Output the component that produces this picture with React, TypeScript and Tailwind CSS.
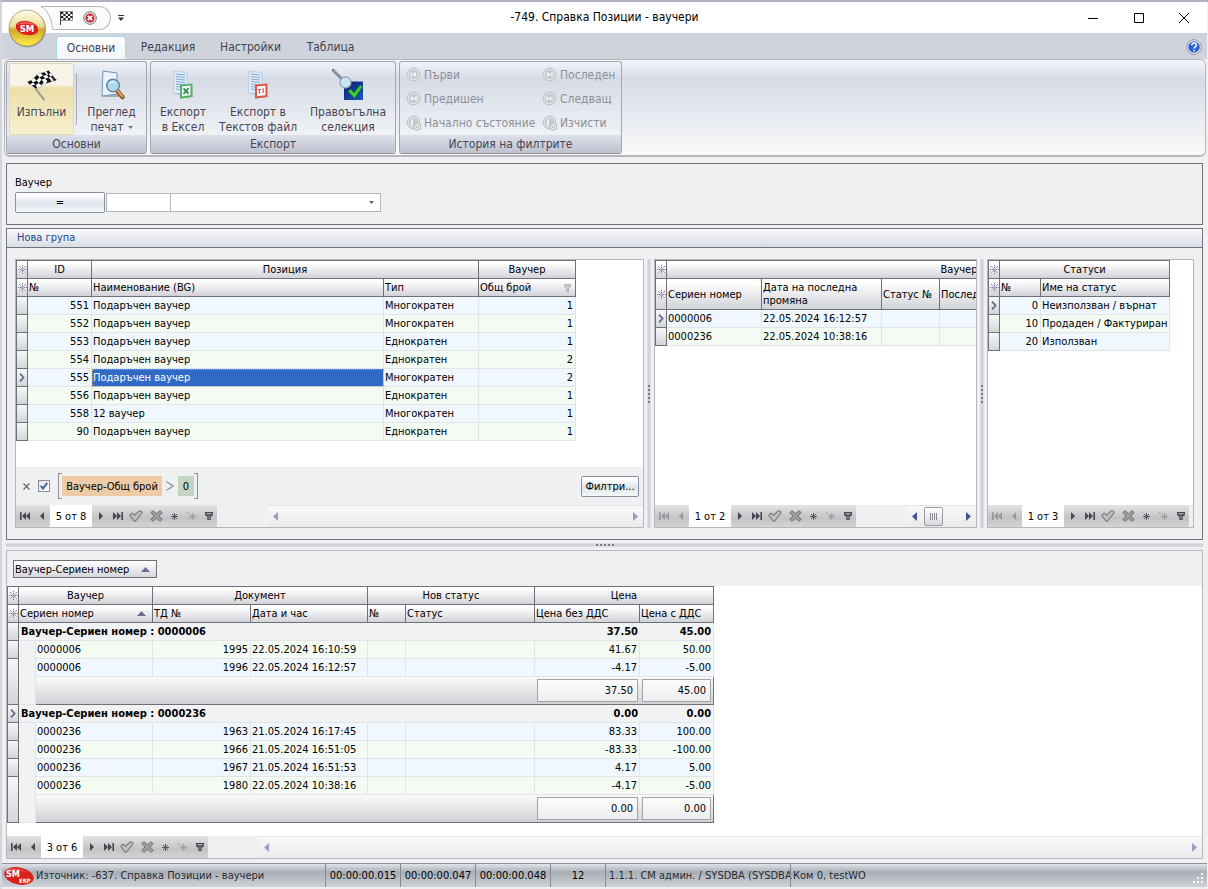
import type { ReactNode } from "react";
import clsx from "clsx";

const headBase =
  "h-[18px] border-r border-b border-[#707176] bg-linear-to-b from-white from-10% via-[#ececef] via-50% to-[#d2d3d8] font-normal overflow-hidden";
const headCell = clsx(headBase, "pl-px pr-0.5 text-left leading-[17px] whitespace-nowrap");
const bandCell = clsx(headBase, "border-t px-0.5 text-center leading-[17px] whitespace-nowrap");
const wrapCell = clsx(headBase, "pl-px pr-0.5 text-left leading-[13px]");
const bodyCell =
  "h-[18px] border-r border-b border-[#e2e4e9] pl-px pr-0.5 leading-[17px] whitespace-nowrap overflow-hidden";
const indicatorCell =
  "h-[18px] border-x border-b border-[#707176] bg-linear-to-b from-[#f6f7f9] to-[#d3d5da] p-0";
const gridTable = "table-fixed border-separate border-spacing-0";
const blueRow = "bg-[#f0f7ff]";
const greenRow = "bg-[#f4fbf3]";
const pushButton =
  "rounded-xs border border-[#8a8f9b] bg-linear-to-b from-white from-10% via-[#dde4ea] via-55% to-[#f7fafc] text-black";

const SnowMark = () => (
  <svg viewBox="0 0 9 9" className="mx-auto block h-[9px] w-[9px]" stroke="#7d7c9c" strokeWidth="1" fill="none">
    <path d="M4.5 0v9M0 4.5h9M1 1l7 7M8 1l-7 7" strokeDasharray="1.3 0.7" />
  </svg>
);

const RowArrow = () => (
  <svg viewBox="0 0 6 9" className="mx-auto block h-[9px] w-[6px]" fill="none" stroke="#66648a" strokeWidth="1.7">
    <path d="M1 0.7l3.6 3.8L1 8.3" />
  </svg>
);

const SortUp = () => (
  <svg viewBox="0 0 9 5" className="h-[5px] w-[9px] flex-none" fill="#6d6b90">
    <path d="M4.5 0L9 5H0z" />
  </svg>
);

const HeadIndicator = ({ top }: { top?: boolean }) => (
  <th className={clsx(headBase, "border-l p-0", top && "border-t")}>
    <SnowMark />
  </th>
);

const Indicator = ({ current, rowSpan }: { current?: boolean; rowSpan?: number }) => (
  <td rowSpan={rowSpan} className={indicatorCell}>
    {current && <RowArrow />}
  </td>
);

/* ---------- record navigator ---------- */

type NavButtonProps = { label: string; width: string; disabled?: boolean; children: ReactNode };

const NavButton = ({ label, width, disabled, children }: NavButtonProps) => (
  <button
    aria-label={label}
    disabled={disabled}
    className={clsx(
      "flex h-full flex-none items-center justify-center",
      width,
      disabled ? "text-[#96989e]" : "text-[#454852]"
    )}
  >
    {children}
  </button>
);

const Navigator = ({ position, atStart }: { position: string; atStart?: boolean }) => (
  <div className="flex h-[22px] flex-none items-center bg-linear-to-b from-[#e3e3e4] via-[#c3c3c5] via-60% to-[#d4d4d6]">
    <NavButton label="Първи запис" width="w-[18px]" disabled={atStart}>
      <svg viewBox="0 0 10 8" className="h-2 w-2.5" fill="currentColor">
        <path d="M0 0h1.6v8H0zM6 0v8L2 4zM10 0v8L6 4z" />
      </svg>
    </NavButton>
    <NavButton label="Предишен запис" width="w-4" disabled={atStart}>
      <svg viewBox="0 0 4 8" className="h-2 w-1" fill="currentColor">
        <path d="M4 0v8L0 4z" />
      </svg>
    </NavButton>
    <span className="flex h-full w-[42px] flex-none items-center justify-center bg-white">{position}</span>
    <NavButton label="Следващ запис" width="w-[18px]">
      <svg viewBox="0 0 4 8" className="h-2 w-1" fill="currentColor">
        <path d="M0 0v8l4-4z" />
      </svg>
    </NavButton>
    <NavButton label="Последен запис" width="w-4">
      <svg viewBox="0 0 10 8" className="h-2 w-2.5" fill="currentColor">
        <path d="M8.4 0H10v8H8.4zM0 0v8l4-4zM4 0v8l4-4z" />
      </svg>
    </NavButton>
    <NavButton label="Запази" width="w-5">
      <svg viewBox="0 0 14 12" className="h-3 w-3.5" fill="#c0c1c3" stroke="#7f8083" strokeWidth="1.2" strokeLinejoin="round">
        <path d="M0.800 5.400C1.400 4 2.200 3.200 3.400 3.300L5.600 5.300 9.800 1.200C11 0.300 12.800 1 13.200 2.600L6.400 11.200H5.200z" />
      </svg>
    </NavButton>
    <NavButton label="Откажи" width="w-5">
      <svg viewBox="0 0 13 12" className="h-3 w-[13px]" fill="#9c9da0" stroke="#75767a" strokeLinejoin="round">
        <path d="M0.8 2.6L3 0.7l3.5 3 3.5-3 2.2 1.9L9 6l3.2 3.4-2.2 1.9-3.5-3-3.5 3-2.2-1.9L4 6z" />
      </svg>
    </NavButton>
    <NavButton label="Отметка" width="w-[17px]">
      <svg viewBox="0 0 7 7" className="h-[7px] w-[7px]" fill="none" stroke="currentColor" strokeWidth="0.9">
        <path d="M3.500 0v7M0 3.500h7M1 1l1.700 1.700M4.300 4.300L6 6M6 1L4.300 2.700M2.700 4.300L1 6" />
      </svg>
    </NavButton>
    <NavButton label="Към отметката" width="w-[17px]" disabled>
      <svg viewBox="0 0 9 9" className="h-[9px] w-[9px]" fill="none" stroke="currentColor" strokeWidth="0.9">
        <path d="M0.500 0l0.800 2M5.500 1v7M2 4.500h7M3 2l1.700 1.700M6.300 5.300L8 7M8 2L6.300 3.700M4.700 5.300L3 7" />
      </svg>
    </NavButton>
    <NavButton label="Филтър" width="w-[17px]">
      <svg viewBox="0 0 8 8" className="h-2 w-2" fill="none" stroke="currentColor" strokeWidth="1.3">
        <path d="M0 0.7h8M0.8 0.7v2.2L3 4.6v3.2h2V4.6l2.2-1.7V0.7M1 3h6" />
      </svg>
    </NavButton>
  </div>
);

const ScrollArrow = ({ left, active }: { left?: boolean; active?: boolean }) => (
  <button aria-label={left ? "Наляво" : "Надясно"} className="flex h-full w-4 flex-none items-center justify-center">
    <svg viewBox="0 0 5 9" className="h-[9px] w-[5px]" fill={active ? "#46548c" : "#93a1c9"}>
      <path d={left ? "M5 0v9L0 4.5z" : "M0 0v9l5-4.5z"} />
    </svg>
  </button>
);

const ScrollTrack = ({ children }: { children: ReactNode }) => (
  <div className="flex h-[22px] items-center justify-between border-t border-[#e4e4e6] bg-linear-to-b from-[#f8f8f9] to-[#ebebec]">
    {children}
  </div>
);

const dots = [0, 1, 2, 3, 4];

const VerticalSplitter = () => (
  <div className="flex items-center justify-center">
    <div className="flex h-full w-1 items-center justify-center border-x border-[#dcdee2] bg-[#d0d3d9]">
      <div className="flex flex-col gap-0.5">
        {dots.map((d) => (
          <i key={d} className="block h-0.5 w-0.5 bg-[#7b7d83]" />
        ))}
      </div>
    </div>
  </div>
);

/* ---------- title bar and ribbon ---------- */

const CheckerFlag = () => (
  <svg viewBox="0 0 32 32" className="h-8 w-8">
    <path d="M1.500 13C8 11 9 4.500 15 4 18 3.700 20 3 22.500 1.500L30.500 11C27 13 24 12 20 14.500 16 17 14 19 9.500 19.500z" fill="#fff" stroke="#888" strokeWidth="0.500" />
    <path
      d="M1.500 13l3.600-1.800 2 2.200-3.500 2zM8 9l3-3.200 2.500 2.400L10.500 11.500zM15 4l3.800-0.600 2 2.600-3.800 0.700zM20.500 2.500l2-1 2 2.400-2.200 1.500zM7.100 13.400l3.400-1.900 2.300 2.500-3.300 2.200zM13.500 8.200l3.500-1.500 2 2.700-3.500 1.400zM20.800 6l2-0.800 2 2.500-2 1zM26.500 6.500l1.800 2.100-2 1-1.500-1.900zM5.800 16l3.700-0.300 1.700 3.300-1.700 0.500zM12.800 14l2.700-3.200 2.300 2.500-2.500 3zM19 9.400l3.800-0.700 2 2.600-3.500 0.800zM28.300 9l2.200 2-2.800 1-1.400-2.400zM20 14.500l1.300-2.400 3.500-0.800 1 1.200z"
      fill="#111"
    />
    <path d="M9.500 19.500L18.500 31" stroke="#777" strokeWidth="1.800" />
    <path d="M9.800 19.500L18.500 30.500" stroke="#ddd" strokeWidth="0.600" />
  </svg>
);

const SheetIcon = ({ color, children }: { color: string; children: ReactNode }) => (
  <svg viewBox="0 0 24 32" className="h-8 w-6">
    <path d="M3 24l14 5.500 6-2-6-3z" fill="#a9adb8" opacity="0.7" />
    <path d="M3 2l13 1.500v22L2.500 24z" fill="#dcebf7" stroke="#a5bfd6" strokeWidth="0.600" />
    <path d="M5 5l9 1M5 7.500l9 1M5 10l9 1M5 12.500l9 1M5 15l9 1M5 17.500l5 0.600M5 20l5 0.600" stroke="#78a8d0" strokeWidth="0.900" />
    <path d="M10 16.500l10.500-1v11.500L10 28.500z" fill="#f7fbf7" stroke={color} strokeWidth="2" />
    {children}
  </svg>
);

const ExcelIcon = () => (
  <SheetIcon color="#55b06b">
    <path d="M12.500 19.500l5 5M17.500 19l-5 6" stroke="#2d8f47" strokeWidth="1.800" />
  </SheetIcon>
);

const TextFileIcon = () => (
  <SheetIcon color="#dc5744">
    <path d="M12 20.500h3M13.500 20.500v4M16.500 20h1.500M17.200 20v4" stroke="#dc5744" strokeWidth="1.200" />
  </SheetIcon>
);

const PreviewIcon = () => (
  <svg viewBox="0 0 32 32" className="h-8 w-8">
    <path d="M4 28h20l-4-4z" fill="#8f949e" opacity="0.7" />
    <path d="M7 2l14 2v21L6 27z" fill="#eaf3fb" stroke="#7396b5" />
    <path d="M20.500 21l6 7" stroke="#8a5a26" strokeWidth="4.500" strokeLinecap="round" />
    <path d="M20.500 20.500l6 7" stroke="#e0a34f" strokeWidth="2" strokeLinecap="round" />
    <circle cx="17" cy="16.500" r="6.300" fill="#a9dcf3" stroke="#75808d" strokeWidth="1.500" />
    <path d="M13 15c1.500-3 5-3.500 7-1.500-2.500 0-4.500 0.500-7 1.500z" fill="#eefaff" />
  </svg>
);

const SelectionIcon = () => (
  <svg viewBox="0 0 32 32" className="h-8 w-8">
    <defs>
      <linearGradient id="selBox" x1="0" y1="0" x2="1" y2="1">
        <stop offset="0" stopColor="#061c63" />
        <stop offset="1" stopColor="#1f57c4" />
      </linearGradient>
    </defs>
    <rect x="12" y="12.500" width="19" height="18.500" fill="url(#selBox)" />
    <path d="M1 1l9 9" stroke="#6a6f78" strokeWidth="2.600" strokeLinecap="round" />
    <path d="M1.500 1l8 8" stroke="#c9cdd4" strokeWidth="0.900" />
    <circle cx="13.500" cy="13.500" r="5.500" fill="#c9e8f7" stroke="#8fa5b8" strokeWidth="1.300" />
    <path d="M16 22l3-1.500 3 3.500 6-7.500 2.500 1L22.500 29z" fill="#43d232" stroke="#1b8d18" strokeWidth="0.600" />
  </svg>
);

const HistoryIcon = ({ glyph, badge }: { glyph: string; badge?: boolean }) => (
  <svg viewBox="0 0 16 16" className="h-4 w-4 flex-none">
    <circle cx="7.500" cy="7.500" r="6.400" fill="#dfe1e5" stroke="#bcbfc5" />
    <circle cx="7.500" cy="7.500" r="4.600" fill="#c4c7cc" />
    <path d={glyph} fill="#f3f4f6" />
    {badge && (
      <>
        <circle cx="11.500" cy="11.500" r="3.600" fill="#e9eaec" stroke="#b3b6bb" />
        <path d="M10 13l3-3M10 10.500l0.800 0.800M12.200 12.500l0.800 0.800" stroke="#a5a8ae" strokeWidth="0.900" />
      </>
    )}
  </svg>
);

const RibbonGroup = ({ title, children }: { title: string; children: ReactNode }) => (
  <section className="flex h-[93px] flex-none flex-col overflow-hidden rounded-[3px] border border-[#a4a7ae] border-b-[#8e9097]">
    <div className="flex flex-1 pt-px">{children}</div>
    <h2 className="h-[18px] bg-linear-to-b from-[#dce1ec] to-[#bdc2ce] text-center leading-[19px]">{title}</h2>
  </section>
);

const RibbonButton = ({ icon, width, children }: { icon: ReactNode; width: string; children: ReactNode }) => (
  <button className={clsx("flex flex-none flex-col items-center gap-1 pt-1.5 text-center leading-[15px]", width)}>
    <span className="flex h-8 items-center">{icon}</span>
    <span>{children}</span>
  </button>
);

const history = [
  { label: "Първи", glyph: "M4.500 5h1.300v5H4.500zM10 5v5L6 7.500z" },
  { label: "Последен", glyph: "M9.300 5h1.300v5H9.300zM5 5v5l4-2.500z" },
  { label: "Предишен", glyph: "M7.300 5v5l-3.500-2.500zM11 5v5L7.500 7.500z" },
  { label: "Следващ", glyph: "M4.200 5v5l3.500-2.500zM7.900 5v5l3.500-2.500z" },
  { label: "Начално състояние", glyph: "M5 4.500h2v6H5z", badge: true },
  { label: "Изчисти", glyph: "M5 4.500h2v6H5z", badge: true },
];

const tabs = [
  { label: "Редакция", width: "w-[78px]" },
  { label: "Настройки", width: "w-[87px]" },
  { label: "Таблица", width: "w-[73px]" },
];

const AppOrb = () => (
  <button aria-label="Меню" className="absolute top-[6px] left-[5px] h-10 w-10">
    <svg viewBox="0 0 40 40" className="h-10 w-10">
      <defs>
        <linearGradient id="gold" x1="0" y1="0" x2="0" y2="1">
          <stop offset="0" stopColor="#fffdf0" />
          <stop offset="0.450" stopColor="#eedd92" />
          <stop offset="0.550" stopColor="#cfa72c" />
          <stop offset="1" stopColor="#fff04a" />
        </linearGradient>
      </defs>
      <circle cx="20.500" cy="21" r="18.500" fill="#9a9ca4" />
      <circle cx="20" cy="20" r="18" fill="url(#gold)" stroke="#a8935a" strokeWidth="0.800" />
      <ellipse cx="20" cy="20" rx="11.500" ry="7" fill="#dc1f1c" transform="rotate(12 20 20)" />
      <path d="M9.500 17c4-5 15-4 19 0.500-6-1.500-13-2-19-0.500z" fill="#ee5a52" />
      <text x="20" y="23.500" fontSize="9.500" fontWeight="bold" fill="#fff" textAnchor="middle">
        SM
      </text>
    </svg>
  </button>
);

const TitleBar = () => (
  <header className="relative">
    <div className="flex h-[31px] items-center bg-white">
      <div className="flex flex-1 items-center">
        <svg viewBox="0 0 12 24" className="ml-[39px] h-6 w-3 flex-none">
          <path d="M0 0.500C7 4 11 14 11.500 23.500H12V0.500z" fill="#fbfbfc" />
          <path d="M12 0.500H0C7 4 11 14 11.500 23.500" fill="none" stroke="#b3b5ba" />
        </svg>
        <div className="flex h-6 w-[58px] items-center gap-2.5 rounded-r-full border border-l-0 border-[#b3b5ba] bg-[#fbfbfc] pl-[7px]">
          <button aria-label="Изпълни">
            <svg viewBox="0 0 13 14" className="h-3.5 w-[13px]">
              <path d="M0.500 0v14" stroke="#444" />
              <path d="M1 0.500h11.500v9H1z" fill="#fff" stroke="#555" strokeWidth="0.600" />
              <path
                d="M1 1h2.300v2H1zM5.600 1h2.300v2H5.600zM10.200 1h2.300v2h-2.300zM3.300 3h2.300v2H3.300zM7.900 3h2.300v2H7.900zM1 5h2.300v2H1zM5.600 5h2.300v2H5.600zM10.200 5h2.300v2h-2.300zM3.300 7h2.300v2H3.300zM7.900 7h2.300v2H7.900z"
                fill="#222"
              />
            </svg>
          </button>
          <button aria-label="Затвори справката">
            <svg viewBox="0 0 14 14" className="h-3.5 w-3.5">
              <circle cx="7" cy="7" r="6.300" fill="#e6e6e8" stroke="#77797e" />
              <circle cx="7" cy="7" r="4.600" fill="#cf2a38" />
              <path d="M4.800 4.800l4.400 4.400M9.200 4.800L4.800 9.200" stroke="#fff" strokeWidth="1.800" />
            </svg>
          </button>
        </div>
        <button aria-label="Още команди" className="ml-[7px]">
          <svg viewBox="0 0 6 6" className="h-1.5 w-1.5" fill="#333">
            <path d="M0 0h6v1H0zM0 2.500h6L3 6z" />
          </svg>
        </button>
      </div>
      <h1 className="text-[12px] text-black">-749. Справка Позиции - ваучери</h1>
      <div className="flex flex-1 justify-end">
        <button aria-label="Намали" className="flex w-[46px] justify-center">
          <svg viewBox="0 0 10 10" className="h-2.5 w-2.5" stroke="#000">
            <path d="M0 5.500h10" />
          </svg>
        </button>
        <button aria-label="Увеличи" className="flex w-[45px] justify-center">
          <svg viewBox="0 0 10 10" className="h-2.5 w-2.5" stroke="#000" fill="none">
            <path d="M0.500 0.500h9v9h-9z" />
          </svg>
        </button>
        <button aria-label="Затвори" className="flex w-[46px] justify-center">
          <svg viewBox="0 0 10 10" className="h-2.5 w-2.5" stroke="#000">
            <path d="M0 0l10 10M10 0L0 10" />
          </svg>
        </button>
      </div>
    </div>
    <nav className="flex h-[26px] items-end bg-[#cfd3dc] pl-[54px] text-[12px] text-[#3f4350]">
      <button className="mr-[3px] h-[23px] w-[70px] rounded-t border border-b-0 border-[#a9dbe4] bg-linear-to-b from-white to-[#f1f4f9]">
        Основни
      </button>
      {tabs.map((t) => (
        <button key={t.label} className={clsx("h-[23px]", t.width)}>
          {t.label}
        </button>
      ))}
      <button aria-label="Помощ" className="mr-[5px] mb-1 ml-auto">
        <svg viewBox="0 0 16 16" className="h-4 w-4">
          <circle cx="8" cy="8" r="7.300" fill="#f2f3f5" stroke="#8f929a" />
          <circle cx="8" cy="8" r="5.800" fill="#2c62d8" />
          <path d="M5.800 6.300c0-3 4.600-3 4.600-0.400 0 1.700-2.200 1.700-2.200 3.500M8.200 10.700v1.500" stroke="#fff" strokeWidth="1.600" fill="none" />
        </svg>
      </button>
    </nav>
    <AppOrb />
  </header>
);

const Ribbon = () => (
  <div className="mr-px ml-0.5 flex h-[98px] flex-none gap-[3px] rounded-md border border-b-2 border-[#b5b7bc] bg-linear-to-b from-[#f5f6fa] from-0% via-[#d6dbe6] via-20% to-[#f9fafa] p-px text-[12px] text-[#474553]">
    <RibbonGroup title="Основни">
      <div className="mr-0.5 ml-0.5 flex rounded-xs bg-linear-to-b from-[#f8f5e8] from-30% via-[#ecdfa8] via-35% to-[#f8f1d2] inset-ring inset-ring-[#e2d9b0]">
        <RibbonButton width="w-[65px]" icon={<CheckerFlag />}>
          Изпълни
        </RibbonButton>
      </div>
      <div className="my-2.5 w-px bg-[#a8abb3]" />
      <RibbonButton width="w-[69px]" icon={<PreviewIcon />}>
        Преглед
        <br />
        печат
        <svg viewBox="0 0 5 3" className="ml-1 inline-block h-[3px] w-[5px] align-middle" fill="#777">
          <path d="M0 0h5L2.500 3z" />
        </svg>
      </RibbonButton>
    </RibbonGroup>
    <RibbonGroup title="Експорт">
      <RibbonButton width="w-[64px]" icon={<ExcelIcon />}>
        Експорт
        <br />в Ексел
      </RibbonButton>
      <RibbonButton width="w-[86px]" icon={<TextFileIcon />}>
        Експорт в
        <br />
        Текстов файл
      </RibbonButton>
      <RibbonButton width="w-[94px]" icon={<SelectionIcon />}>
        Правоъгълна
        <br />
        селекция
      </RibbonButton>
    </RibbonGroup>
    <RibbonGroup title="История на филтрите">
      <div className="grid w-[221px] grid-cols-[136px_79px] grid-rows-3 pl-1.5">
        {history.map((h) => (
          <button key={h.label} disabled className="flex items-center gap-0.5 whitespace-nowrap text-[#8e9097]">
            <HistoryIcon glyph={h.glyph} badge={h.badge} />
            {h.label}
          </button>
        ))}
      </div>
    </RibbonGroup>
  </div>
);

/* ---------- panels ---------- */

const VoucherFilter = () => (
  <section className="mx-1 mt-1.5 h-[62px] border border-[#707379] px-2 pt-2.5">
    <label htmlFor="voucher-code" className="block h-[18px] leading-[17px]">
      Ваучер
    </label>
    <div className="flex h-[21px] items-center">
      <button className={clsx(pushButton, "mr-px h-[21px] w-[90px]")}>=</button>
      <input id="voucher-code" className="h-[19px] w-[65px] border border-[#b4b7be] bg-white px-1" />
      <div className="relative">
        <select
          aria-label="Ваучер"
          className="block h-[19px] w-[210px] appearance-none border border-l-0 border-[#b4b7be] bg-white px-1"
        >
          <option></option>
        </select>
        <svg viewBox="0 0 5 3" className="pointer-events-none absolute top-2 right-[7px] h-[3px] w-[5px]" fill="#666">
          <path d="M0 0h5L2.500 3z" />
        </svg>
      </div>
    </div>
  </section>
);

const positions = [
  { id: 551, name: "Подаръчен ваучер", type: "Многократен", count: 1 },
  { id: 552, name: "Подаръчен ваучер", type: "Многократен", count: 1 },
  { id: 553, name: "Подаръчен ваучер", type: "Еднократен", count: 1 },
  { id: 554, name: "Подаръчен ваучер", type: "Еднократен", count: 2 },
  { id: 555, name: "Подаръчен ваучер", type: "Многократен", count: 2 },
  { id: 556, name: "Подаръчен ваучер", type: "Еднократен", count: 1 },
  { id: 558, name: "12 ваучер", type: "Многократен", count: 1 },
  { id: 90, name: "Подаръчен ваучер", type: "Еднократен", count: 1 },
];

const PositionsTable = () => (
  <table className={clsx(gridTable, "w-[560px]")}>
    <colgroup>
      <col className="w-[12px]" />
      <col className="w-[64px]" />
      <col className="w-[292px]" />
      <col className="w-[95px]" />
      <col className="w-[97px]" />
    </colgroup>
    <thead>
      <tr className="h-[19px]">
        <HeadIndicator top />
        <th className={bandCell}>ID</th>
        <th colSpan={2} className={bandCell}>
          Позиция
        </th>
        <th className={bandCell}>Ваучер</th>
      </tr>
      <tr>
        <HeadIndicator />
        <th className={headCell}>№</th>
        <th className={headCell}>Наименование (BG)</th>
        <th className={headCell}>Тип</th>
        <th className={headCell}>
          <div className="flex items-center justify-between pr-0.5">
            Общ брой
            <svg viewBox="0 0 7 8" className="h-2 w-[7px]" fill="#c6c8cc" stroke="#a3a5aa" strokeWidth="0.700">
              <path d="M0.400 0.400h6.200v2L4.500 4v3.500h-2V4L0.400 2.400z" />
            </svg>
          </div>
        </th>
      </tr>
    </thead>
    <tbody>
      {positions.map((p, i) => (
        <tr key={p.id} className={i % 2 ? greenRow : blueRow}>
          <Indicator current={p.id === 555} />
          <td className={clsx(bodyCell, "text-right")}>{p.id}</td>
          <td
            className={clsx(
              bodyCell,
              p.id === 555 && "bg-[#316ac5] text-white outline-1 -outline-offset-1 outline-dotted outline-[#d9a35a]"
            )}
          >
            {p.name}
          </td>
          <td className={bodyCell}>{p.type}</td>
          <td className={clsx(bodyCell, "text-right")}>{p.count}</td>
        </tr>
      ))}
    </tbody>
  </table>
);

const FilterBar = () => (
  <div className="flex h-[38px] flex-none items-center bg-[#eff0f2] pr-1 pl-[7px]">
    <button aria-label="Изчисти филтъра">
      <svg viewBox="0 0 7 7" className="h-[7px] w-[7px]" stroke="#666" strokeWidth="1.200">
        <path d="M0.500 0.500l6 6M6.500 0.500l-6 6" />
      </svg>
    </button>
    <label className="relative ml-2 flex h-3 w-3">
      <input
        type="checkbox"
        defaultChecked
        aria-label="Филтърът е активен"
        className="peer h-3 w-3 appearance-none border border-[#8b8e95] bg-linear-to-br from-[#dfe3e8] to-white"
      />
      <svg
        viewBox="0 0 8 8"
        className="pointer-events-none absolute top-0.5 left-0.5 hidden h-2 w-2 peer-checked:block"
        fill="none"
        stroke="#3e62a0"
        strokeWidth="2"
      >
        <path d="M0.800 3.800L3 6.500 7.200 0.800" />
      </svg>
    </label>
    <div className="ml-2 flex h-[26px] items-center">
      <i className="h-full w-1 border border-r-0 border-[#8d8f94]" />
      <button className="h-5 w-[100px] bg-[#eccba6] text-center">Ваучер-Общ брой</button>
      <svg viewBox="0 0 8 10" className="mx-1 h-2.5 w-2" fill="none" stroke="#8b8c90" strokeWidth="1.100">
        <path d="M0.500 0.800L7.300 5 0.500 9.200" />
      </svg>
      <button className="h-5 w-4 bg-[#c3d5c0] text-center">0</button>
      <i className="h-full w-1 border border-l-0 border-[#8d8f94]" />
    </div>
    <button className={clsx(pushButton, "ml-auto h-[21px] w-[58px]")}>Филтри...</button>
  </div>
);

const GridPanel = ({ children, footer }: { children: ReactNode; footer: ReactNode }) => (
  <div className="flex min-h-[269px] min-w-0 flex-col overflow-hidden border border-[#b4b7be] bg-white">
    <div className="flex-1 overflow-hidden">{children}</div>
    {footer}
  </div>
);

const vouchers = [
  { serial: "0000006", changed: "22.05.2024 16:12:57" },
  { serial: "0000236", changed: "22.05.2024 10:38:16" },
];

const VouchersTable = () => (
  <table className={clsx(gridTable, "w-[597px]")}>
    <colgroup>
      <col className="w-[12px]" />
      <col className="w-[95px]" />
      <col className="w-[120px]" />
      <col className="w-[58px]" />
      <col className="w-[312px]" />
    </colgroup>
    <thead>
      <tr className="h-[19px]">
        <HeadIndicator top />
        <th colSpan={4} className={bandCell}>
          Ваучер
        </th>
      </tr>
      <tr className="h-[31px]">
        <HeadIndicator />
        <th className={headCell}>Сериен номер</th>
        <th className={wrapCell}>
          Дата на последна
          <br />
          промяна
        </th>
        <th className={headCell}>Статус №</th>
        <th className={headCell}>Последна промяна</th>
      </tr>
    </thead>
    <tbody>
      {vouchers.map((v, i) => (
        <tr key={v.serial} className={i % 2 ? greenRow : blueRow}>
          <Indicator current={i === 0} />
          <td className={bodyCell}>{v.serial}</td>
          <td className={bodyCell}>{v.changed}</td>
          <td className={bodyCell}></td>
          <td className={bodyCell}></td>
        </tr>
      ))}
    </tbody>
  </table>
);

const statuses = [
  { id: 0, name: "Неизползван / върнат" },
  { id: 10, name: "Продаден / Фактуриран" },
  { id: 20, name: "Използван" },
];

const StatusesTable = () => (
  <table className={clsx(gridTable, "w-[182px]")}>
    <colgroup>
      <col className="w-[12px]" />
      <col className="w-[41px]" />
      <col className="w-[129px]" />
    </colgroup>
    <thead>
      <tr className="h-[19px]">
        <HeadIndicator top />
        <th colSpan={2} className={bandCell}>
          Статуси
        </th>
      </tr>
      <tr>
        <HeadIndicator />
        <th className={headCell}>№</th>
        <th className={headCell}>Име на статус</th>
      </tr>
    </thead>
    <tbody>
      {statuses.map((s, i) => (
        <tr key={s.id} className={i % 2 ? greenRow : blueRow}>
          <Indicator current={i === 0} />
          <td className={clsx(bodyCell, "text-right")}>{s.id}</td>
          <td className={bodyCell}>{s.name}</td>
        </tr>
      ))}
    </tbody>
  </table>
);

const NewGroup = () => (
  <section className="mx-1 mt-[3px] border border-[#707379]">
    <h2 className="h-[19px] border-b border-[#707379] bg-linear-to-b from-[#f9fafb] to-[#d9dde5] px-2.5 leading-[18px] text-[#1e4a8f]">
      Нова група
    </h2>
    <div className="grid grid-cols-[minmax(0,629fr)_10px_minmax(0,323fr)_10px_minmax(0,207fr)] px-2 py-[11px]">
      <GridPanel
        footer={
          <>
            <FilterBar />
            <div className="flex bg-[#eff0f2]">
              <Navigator position="5 от 8" />
              <div className="ml-[50px] flex-1">
                <ScrollTrack>
                  <ScrollArrow left />
                  <ScrollArrow />
                </ScrollTrack>
              </div>
            </div>
          </>
        }
      >
        <PositionsTable />
      </GridPanel>
      <VerticalSplitter />
      <GridPanel
        footer={
          <div className="flex justify-between bg-[#eff0f2]">
            <Navigator position="1 от 2" atStart />
            <div className="w-[70px]">
              <ScrollTrack>
                <ScrollArrow left active />
                <div className="mr-4 flex h-[19px] w-[19px] items-center justify-center gap-px rounded-xs border border-[#9a9ca2] bg-linear-to-b from-white to-[#d9dadd]">
                  {dots.slice(1).map((d) => (
                    <i key={d} className="h-[7px] w-px bg-[#8a8c92]" />
                  ))}
                </div>
                <ScrollArrow active />
              </ScrollTrack>
            </div>
          </div>
        }
      >
        <VouchersTable />
      </GridPanel>
      <VerticalSplitter />
      <GridPanel
        footer={
          <div className="flex bg-[#eff0f2]">
            <Navigator position="1 от 3" atStart />
          </div>
        }
      >
        <StatusesTable />
      </GridPanel>
    </div>
  </section>
);

const documentGroups = [
  {
    serial: "0000006",
    net: "37.50",
    gross: "45.00",
    colors: [greenRow, blueRow],
    rows: [
      { doc: 1995, date: "22.05.2024 16:10:59", net: "41.67", gross: "50.00" },
      { doc: 1996, date: "22.05.2024 16:12:57", net: "-4.17", gross: "-5.00" },
    ],
  },
  {
    serial: "0000236",
    current: true,
    net: "0.00",
    gross: "0.00",
    colors: [blueRow, greenRow],
    rows: [
      { doc: 1963, date: "21.05.2024 16:17:45", net: "83.33", gross: "100.00" },
      { doc: 1966, date: "21.05.2024 16:51:05", net: "-83.33", gross: "-100.00" },
      { doc: 1967, date: "21.05.2024 16:51:53", net: "4.17", gross: "5.00" },
      { doc: 1980, date: "22.05.2024 10:38:16", net: "-4.17", gross: "-5.00" },
    ],
  },
];

const groupCell = "h-[18px] border-b border-[#e2e4e9] px-0.5 leading-[17px] font-bold whitespace-nowrap";
const totalCell = "h-7 border-b border-[#707176] bg-linear-to-b from-[#fafafa] to-[#d0d1d5] p-0";
const totalBox =
  "mx-0.5 h-[23px] border border-[#a2a4a9] bg-linear-to-b from-[#fcfcfc] to-[#ededef] pr-1 text-right leading-[22px]";
const indentCell = "border-r border-[#e2e4e9] bg-[#f1f2f4] p-0";

const DocumentsTable = () => (
  <table className={clsx(gridTable, "w-[707px]")}>
    <colgroup>
      <col className="w-[12px]" />
      <col className="w-[17px]" />
      <col className="w-[117px]" />
      <col className="w-[98px]" />
      <col className="w-[117px]" />
      <col className="w-[38px]" />
      <col className="w-[129px]" />
      <col className="w-[105px]" />
      <col className="w-[74px]" />
    </colgroup>
    <thead>
      <tr className="h-[19px]">
        <HeadIndicator top />
        {["Ваучер", "Документ", "Нов статус", "Цена"].map((title) => (
          <th key={title} colSpan={2} className={bandCell}>
            {title}
          </th>
        ))}
      </tr>
      <tr>
        <HeadIndicator />
        <th colSpan={2} className={headCell}>
          <div className="flex items-center justify-between pr-1">
            Сериен номер
            <SortUp />
          </div>
        </th>
        <th className={headCell}>ТД №</th>
        <th className={headCell}>Дата и час</th>
        <th className={headCell}>№</th>
        <th className={headCell}>Статус</th>
        <th className={headCell}>Цена без ДДС</th>
        <th className={headCell}>Цена с ДДС</th>
      </tr>
    </thead>
    {documentGroups.map((g) => (
      <tbody key={g.serial}>
        <tr className="bg-[#f1f2f4]">
          <Indicator current={g.current} />
          <td colSpan={6} className={groupCell}>
            Ваучер-Сериен номер : {g.serial}
          </td>
          <td className={clsx(groupCell, "text-right")}>{g.net}</td>
          <td className={clsx(groupCell, "border-r text-right")}>{g.gross}</td>
        </tr>
        {g.rows.map((r, i) => (
          <tr key={r.doc} className={g.colors[i % 2]}>
            <Indicator rowSpan={i === g.rows.length - 1 ? 2 : 1} />
            <td className={indentCell}></td>
            <td className={bodyCell}>{g.serial}</td>
            <td className={clsx(bodyCell, "text-right")}>{r.doc}</td>
            <td className={bodyCell}>{r.date}</td>
            <td className={bodyCell}></td>
            <td className={bodyCell}></td>
            <td className={clsx(bodyCell, "text-right")}>{r.net}</td>
            <td className={clsx(bodyCell, "text-right")}>{r.gross}</td>
          </tr>
        ))}
        <tr>
          <td className={clsx(indentCell, "border-b")}></td>
          <td colSpan={5} className={totalCell}></td>
          <td className={totalCell}>
            <div className={totalBox}>{g.net}</div>
          </td>
          <td className={clsx(totalCell, "border-r")}>
            <div className={totalBox}>{g.gross}</div>
          </td>
        </tr>
      </tbody>
    ))}
  </table>
);

const Documents = () => (
  <section className="mx-1 mb-1 flex flex-1 flex-col border border-[#b4b7be] bg-white">
    <div className="h-[35px] flex-none bg-[#eff0f2] px-1.5 pt-[9px]">
      <button className="flex h-[18px] w-[144px] items-center justify-between border border-[#707176] bg-linear-to-b from-white to-[#d6d7dc] pr-1.5 pl-px">
        Ваучер-Сериен номер
        <SortUp />
      </button>
    </div>
    <div className="flex-1">
      <DocumentsTable />
    </div>
    <div className="flex flex-none bg-[#eff0f2]">
      <Navigator position="3 от 6" />
      <div className="ml-[50px] flex-1">
        <ScrollTrack>
          <ScrollArrow left />
          <ScrollArrow />
        </ScrollTrack>
      </div>
    </div>
  </section>
);

const timings = ["00:00:00.015", "00:00:00.047", "00:00:00.048", "12"];

const StatusBar = () => (
  <footer className="mb-0.5 flex h-6 flex-none items-center border-t border-[#8f929a] bg-linear-to-b from-[#e2e4e8] from-0% via-[#a9afb7] via-35% to-[#d0d3d8] text-[#262a33]">
    <div className="flex w-[323px] items-center">
      <svg viewBox="0 0 32 22" className="mr-0.5 h-[22px] w-8 flex-none">
        <ellipse cx="17" cy="11" rx="15" ry="8.500" fill="#d9211c" transform="rotate(12 17 11)" />
        <path d="M3 7C8 1 20 3 25 7.500 18 5 10 5 3 7z" fill="#ec564d" />
        <text x="4" y="12" fontSize="9" fontWeight="bold" fill="#fff">
          SM
        </text>
        <text x="17" y="18" fontSize="6" fontWeight="bold" fill="#fff">
          ERP
        </text>
      </svg>
      <span>Източник: -637. Справка Позиции - ваучери</span>
    </div>
    {timings.map((t, i) => (
      <div
        key={t}
        className={clsx(
          "h-full border-l border-[#85888f] text-center leading-[23px] whitespace-nowrap text-black",
          i === 3 ? "w-[55px]" : "w-[75px]"
        )}
      >
        {t}
      </div>
    ))}
    <div className="h-full w-[185px] border-l border-[#85888f] pl-[3px] leading-[23px] whitespace-nowrap">
      1.1.1. СМ админ. / SYSDBA (SYSDBA
    </div>
    <div className="h-full border-l border-[#85888f] pl-0.5 leading-[23px]">Ком 0, testWO</div>
    <svg viewBox="0 0 10 10" className="mr-1 mb-1 ml-auto h-2.5 w-2.5 self-end" fill="#f7f8f9">
      <path d="M8 0h2v2H8zM4 4h2v2H4zM8 4h2v2H8zM0 8h2v2H0zM4 8h2v2H4zM8 8h2v2H8z" />
    </svg>
  </footer>
);

const App = () => {
  return (
    <div className="flex min-h-screen flex-col border-t-2 border-l-2 border-t-[#afb3bf] border-l-[#d3d6dc] bg-[#eff0f2] pr-px font-['DejaVu_Sans_Condensed','DejaVu_Sans',sans-serif] text-[11px] leading-[13px] text-black">
      <TitleBar />
      <Ribbon />
      <div className="flex flex-1 flex-col">
        <VoucherFilter />
        <NewGroup />
        <div className="mx-1 flex h-2.5 flex-none items-center">
          <div className="flex h-1 w-full items-center justify-center gap-0.5 border-y border-[#dcdee2] bg-[#d0d3d9]">
            {dots.map((d) => (
              <i key={d} className="h-0.5 w-0.5 bg-[#7b7d83]" />
            ))}
          </div>
        </div>
        <Documents />
      </div>
      <StatusBar />
    </div>
  );
};

export default App;
